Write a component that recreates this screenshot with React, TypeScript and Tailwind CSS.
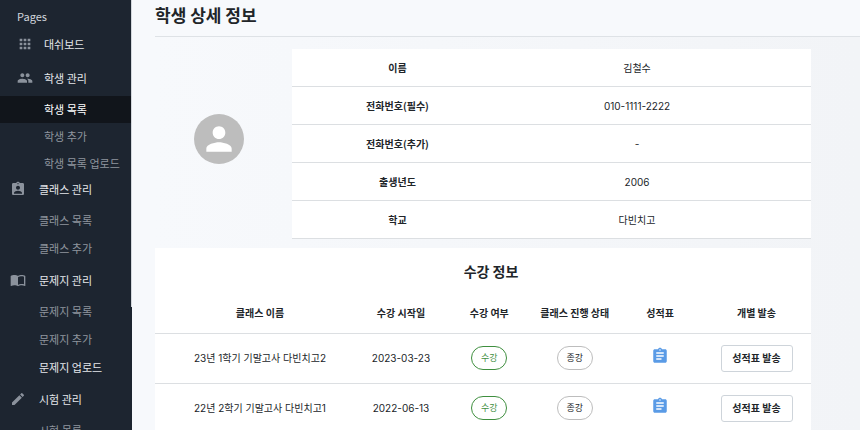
import type { IconType } from 'react-icons';
import {
  MdApps,
  MdAssignment,
  MdAssignmentInd,
  MdEdit,
  MdImportContacts,
  MdPeople,
  MdPerson,
} from 'react-icons/md';

const kr = "font-['Noto_Sans_CJK_KR',sans-serif]";
const mixed = "font-['Inter','Noto_Sans_CJK_KR',sans-serif]";

const student = [
  { label: '이름', value: '김철수' },
  { label: '전화번호(필수)', value: '010-1111-2222' },
  { label: '전화번호(추가)', value: '-' },
  { label: '출생년도', value: '2006' },
  { label: '학교', value: '다빈치고' },
];

const classes = [
  { name: '23년 1학기 기말고사 다빈치고2', start: '2023-03-23' },
  { name: '22년 2학기 기말고사 다빈치고1', start: '2022-06-13' },
];

const groupSizes = {
  wide: 'h-[34px] pl-[17px] gap-[11px] pb-0.5',
  short: 'h-[30px] pl-[10px] gap-[13px] pb-1.5',
  normal: 'h-[35px] pl-[10px] gap-[13px] pb-0.5',
};

function MenuGroup({ icon: Icon, label, size = 'normal' }: { icon: IconType; label: string; size?: keyof typeof groupSizes }) {
  return (
    <a href="#" className={`flex items-center text-gray-200 ${groupSizes[size]}`}>
      <Icon className="size-4 shrink-0 text-[#8b929c]" />
      {label}
    </a>
  );
}

function MenuItem({ label, nested, state }: { label: string; nested?: boolean; state?: 'active' | 'bright' }) {
  return (
    <a
      href="#"
      className={`flex items-center pb-0.5 whitespace-nowrap ${nested ? 'h-[27px] pl-11' : 'h-7 pl-[39px]'} ${
        state === 'active' ? 'bg-[#11151b] text-white' : state === 'bright' ? 'text-gray-200' : 'text-[#8f959e]'
      }`}
    >
      {label}
    </a>
  );
}

function Sidebar() {
  return (
    <nav className="relative w-[132px] shrink-0 overflow-hidden bg-[#1d2530] text-[11px] leading-4">
      <p className="h-7 pt-2 pl-[17px] text-gray-300">Pages</p>
      <MenuGroup icon={MdApps} label="대쉬보드" size="wide" />
      <MenuGroup icon={MdPeople} label="학생 관리" size="wide" />
      <MenuItem label="학생 목록" nested state="active" />
      <MenuItem label="학생 추가" nested />
      <MenuItem label="학생 목록 업로드" nested />
      <MenuGroup icon={MdAssignmentInd} label="클래스 관리" size="short" />
      <MenuItem label="클래스 목록" />
      <MenuItem label="클래스 추가" />
      <MenuGroup icon={MdImportContacts} label="문제지 관리" />
      <MenuItem label="문제지 목록" />
      <MenuItem label="문제지 추가" />
      <MenuItem label="문제지 업로드" state="bright" />
      <MenuGroup icon={MdEdit} label="시험 관리" />
      <MenuItem label="시험 목록" />
      {/* scroll thumb */}
      <span className="absolute top-0 right-0 h-[307px] w-px bg-[#d3d7dc]" />
    </nav>
  );
}

export default function App() {
  return (
    <div className={`flex h-screen overflow-hidden bg-[#f7f9fc] text-[#212529] ${kr}`}>
      <Sidebar />

      <main className="flex min-w-0 flex-1 flex-col pl-[23px]">
        <h1 className="h-[37px] shrink-0 border-b border-[#dee2e6] pt-[3px] text-[17px] leading-6 font-bold">
          학생 상세 정보
        </h1>

        <div className="flex-1 bg-linear-to-r from-[#f7f9fc] to-[#f2f4f7] pt-3 pr-[49px]">
          {/* Profile */}
          <section className="flex">
            <div className="flex w-[137px] shrink-0 items-center justify-center pr-2.5 pb-2.5">
              <div className="flex size-[50px] items-center justify-center rounded-full bg-[#bdbdbd]">
                <MdPerson className="size-[38px] text-white" />
              </div>
            </div>
            <table className={`flex-1 table-fixed border-separate border-spacing-0 bg-white text-center text-[10px] leading-4 ${mixed}`}>
              <tbody>
                {student.map((row) => (
                  <tr key={row.label} className="h-[38px]">
                    <th scope="row" className={`w-[211px] border-b border-[#dcdfe2] font-bold ${kr}`}>{row.label}</th>
                    <td className="border-b border-[#dcdfe2] pr-10">{row.value}</td>
                  </tr>
                ))}
              </tbody>
            </table>
          </section>

          {/* Classes */}
          <section className="mt-[9px] bg-white">
            <h2 className="pt-[11px] pl-4 text-center text-[14px] leading-6 font-bold">수강 정보</h2>
            <table className={`w-full table-fixed text-center text-[10px] leading-4 ${mixed}`}>
              <thead>
                <tr className={`h-[50px] border-b border-[#dcdfe2] ${kr}`}>
                  <th className="w-[32%] pt-2.5">클래스 이름</th>
                  <th className="w-[11%] pt-2.5">수강 시작일</th>
                  <th className="w-[15%] pt-2.5 pl-1.5">수강 여부</th>
                  <th className="w-[12%] pt-2.5">클래스 진행 상태</th>
                  <th className="w-[14%] pt-2.5">성적표</th>
                  <th className="w-[16%] pt-2.5 pr-1">개별 발송</th>
                </tr>
              </thead>
              <tbody>
                {classes.map((row) => (
                  <tr key={row.name} className="h-[50px] border-b border-[#dcdfe2]">
                    <td>{row.name}</td>
                    <td>{row.start}</td>
                    <td className="pl-1.5">
                      <span className="inline-flex h-6 w-9 items-center justify-center rounded-full border border-[#3f8f3f] text-[9px] text-[#3f8f3f]">
                        수강
                      </span>
                    </td>
                    <td>
                      <span className="inline-flex h-6 w-9 items-center justify-center rounded-full border border-[#bdbdbd] text-[9px]">
                        종강
                      </span>
                    </td>
                    <td className="pb-1">
                      <a href="#" aria-label="성적표" className="inline-block align-middle text-[#5a9be6]">
                        <MdAssignment className="size-[18px]" />
                      </a>
                    </td>
                    <td className="pr-1">
                      <button type="button" className={`h-[27px] w-[72px] rounded-[3px] border border-[#ced4da] font-bold ${kr}`}>
                        성적표 발송
                      </button>
                    </td>
                  </tr>
                ))}
              </tbody>
            </table>
          </section>
        </div>
      </main>
    </div>
  );
}
